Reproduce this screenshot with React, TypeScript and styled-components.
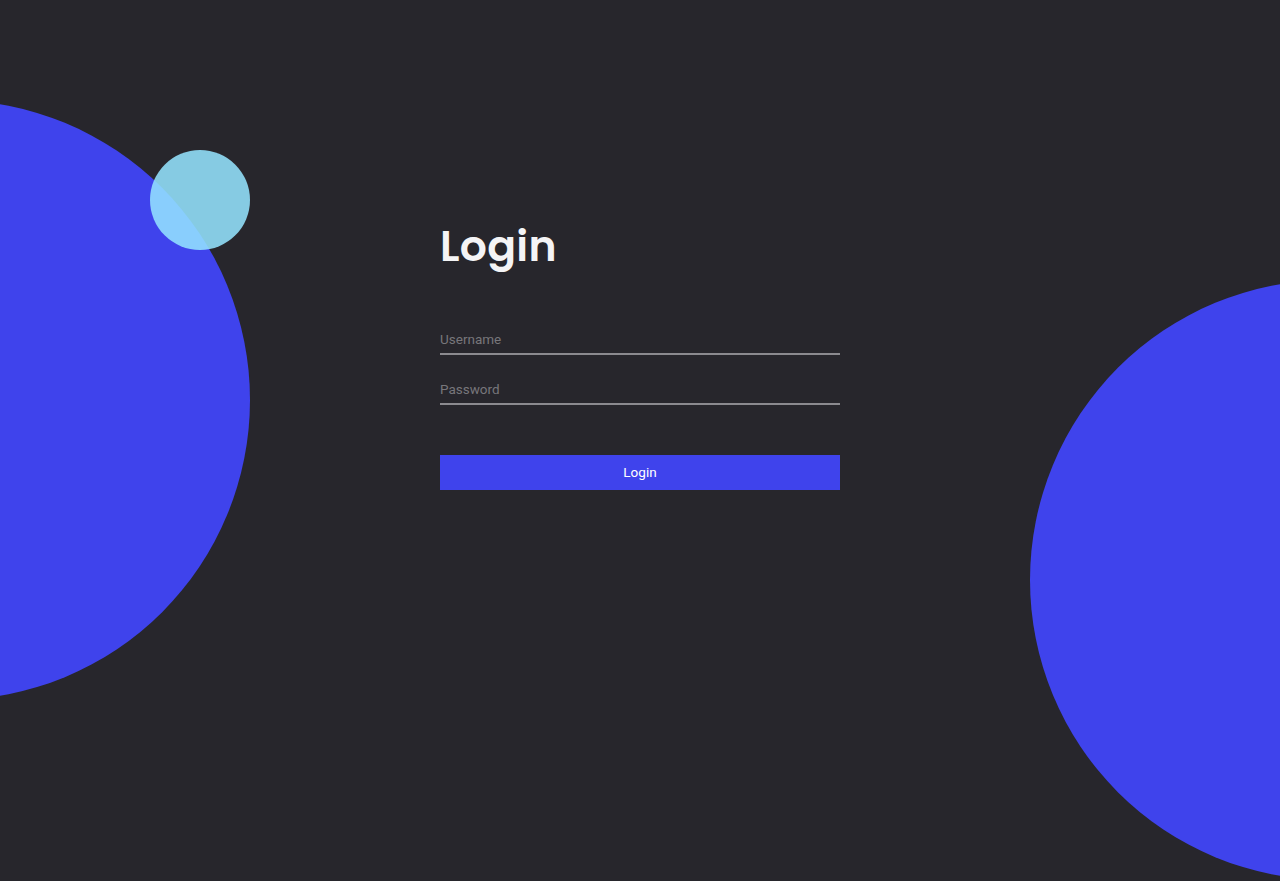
import React from "react";
import styled, { createGlobalStyle } from "styled-components";

const Global = createGlobalStyle`
  html, body { margin: 0; padding: 0; background: #27262c; }
  body { font-family: Roboto, "Liberation Sans", sans-serif; }
  * { box-sizing: border-box; }
`;

const Page = styled.div`
  position: relative;
  width: 100%;
  height: 881px;
  overflow: hidden;
  background: #27262c;
  display: flex;
  justify-content: center;
`;

const Circle = styled.div<{ $size: number; $left: number; $top: number; $color: string }>`
  position: absolute;
  width: ${(p) => p.$size}px;
  height: ${(p) => p.$size}px;
  left: ${(p) => p.$left}px;
  top: ${(p) => p.$top}px;
  border-radius: 50%;
  background: ${(p) => p.$color};
`;

const Form = styled.form`
  position: relative;
  z-index: 1;
  width: 400px;
  margin-top: 218px;
  display: flex;
  flex-direction: column;
`;

const Title = styled.h1`
  margin: 0 0 50px;
  font-family: "Poppins", "Open Sans", "Noto Sans", sans-serif;
  font-weight: 600;
  font-size: 42.5px;
  line-height: 56px;
  color: #f4f4f6;
  letter-spacing: 0.3px;
`;

const Field = styled.input`
  display: block;
  width: 100%;
  height: 31px;
  margin-bottom: 19px;
  padding: 5px 0 5px;
  background: transparent;
  border: none;
  border-bottom: 2px solid #8b8a8f;
  outline: none;
  font-family: Roboto, "Liberation Sans", sans-serif;
  font-size: 13.5px;
  color: #ddd;
  &::placeholder { color: #77767b; }
`;

const Button = styled.button`
  margin-top: 31px;
  height: 35px;
  padding: 0 0 2px;
  width: 100%;
  border: none;
  background: #3f43ec;
  color: #fff;
  font-family: Roboto, "Liberation Sans", sans-serif;
  font-size: 13.5px;
  font-weight: 400;
  cursor: pointer;
`;

export default function App() {
  return (
    <>
      <Global />
      <Page>
        <Circle $size={600} $left={-350} $top={100} $color="#3f43ec" />
        <Circle $size={600} $left={1030} $top={280} $color="#3f43ec" />
        <Circle $size={100} $left={150} $top={150} $color="rgba(148, 227, 255, 0.87)" />
        <Form onSubmit={(e) => e.preventDefault()}>
          <Title>Login</Title>
          <Field type="text" placeholder="Username" />
          <Field type="password" placeholder="Password" />
          <Button type="submit">Login</Button>
        </Form>
      </Page>
    </>
  );
}
